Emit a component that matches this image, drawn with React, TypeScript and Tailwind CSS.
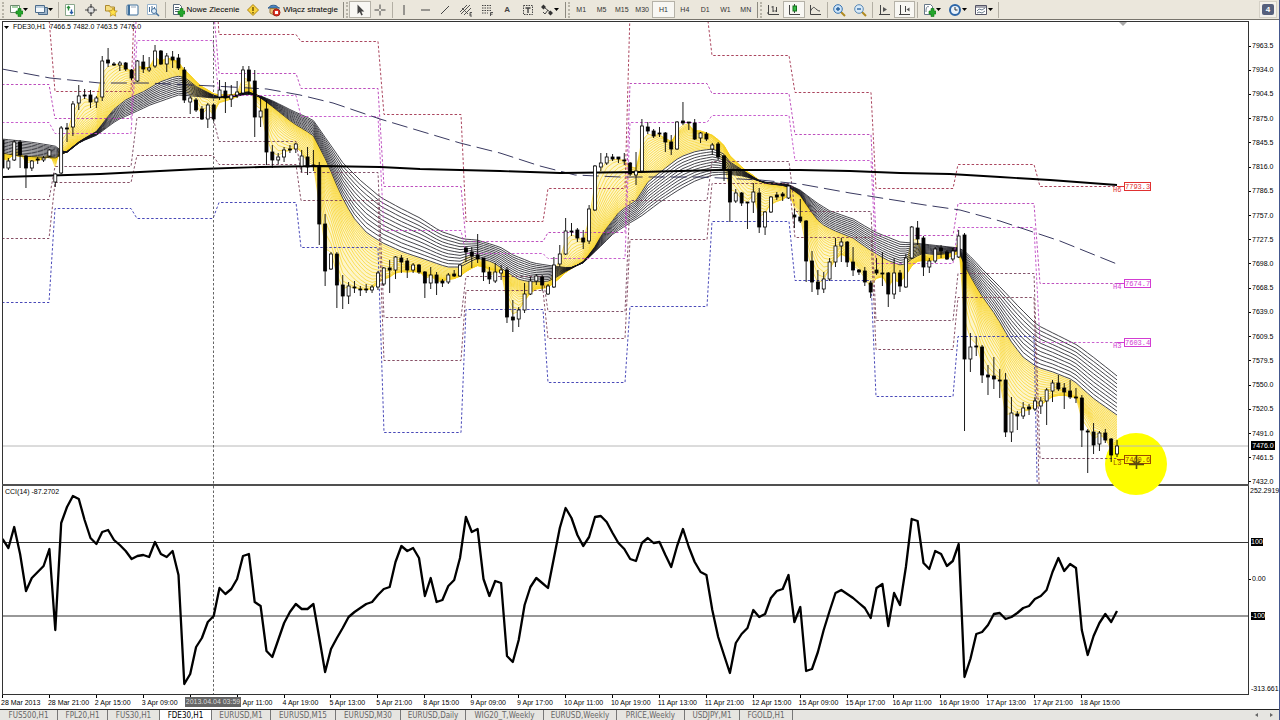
import type { ReactNode } from "react";
import clsx from "clsx";

type Point = [number, number];
// high, body top, body bottom, low, rising
type Candle = [number, number, number, number, number];

const STEP = 5.866;
const barX = (i: number) => 2.5 + STEP * i;

const CANDLES: Candle[] = [
  [133, 140, 168, 170, 0], [158, 161, 168, 170, 1], [140, 142, 160, 161, 1], [140, 142, 155, 168, 0],
  [155, 156, 168, 188, 0], [160, 161, 168, 171, 1], [157, 159, 160, 164, 0], [156, 158, 160, 162, 1],
  [149, 150, 156, 157, 1], [173, 174, 182, 187, 1], [126, 128, 173, 174, 1], [123, 128, 129, 142, 0],
  [101, 104, 127, 136, 1], [85, 96, 103, 110, 1], [89, 95, 96, 99, 0], [90, 95, 102, 108, 0],
  [96, 98, 102, 108, 1], [56, 61, 97, 101, 1], [48, 60, 63, 67, 0], [62, 64, 65, 66, 0],
  [61, 63, 65, 71, 1], [62, 63, 69, 71, 0], [69, 70, 78, 80, 0], [60, 61, 81, 82, 1],
  [55, 62, 69, 73, 0], [57, 68, 70, 72, 1], [45, 51, 66, 68, 1], [50, 51, 64, 65, 0],
  [53, 56, 64, 72, 1], [51, 57, 60, 68, 0], [54, 58, 68, 70, 0], [67, 70, 100, 103, 0],
  [96, 98, 102, 114, 1], [98, 100, 110, 112, 0], [106, 109, 119, 120, 0], [103, 105, 119, 128, 1],
  [104, 105, 119, 121, 0], [80, 90, 97, 100, 1], [82, 91, 98, 113, 0], [85, 95, 99, 107, 1],
  [81, 92, 95, 98, 1], [66, 70, 93, 95, 1], [66, 70, 81, 95, 0], [70, 81, 117, 137, 0],
  [98, 111, 117, 127, 1], [100, 109, 152, 165, 0], [145, 152, 160, 168, 0], [153, 157, 160, 164, 1],
  [147, 150, 157, 162, 1], [145, 149, 150, 153, 0], [143, 144, 149, 153, 1], [150, 156, 166, 172, 1],
  [147, 157, 167, 175, 0], [150, 165, 166, 171, 0], [162, 166, 224, 245, 0], [214, 224, 271, 286, 0],
  [252, 254, 269, 270, 1], [252, 254, 285, 308, 0], [275, 285, 296, 309, 0], [282, 286, 296, 304, 1],
  [281, 287, 288, 293, 0], [286, 289, 290, 296, 0], [284, 289, 290, 293, 0], [285, 287, 290, 293, 1],
  [271, 273, 287, 290, 1], [267, 268, 284, 286, 1], [260, 268, 270, 293, 0], [256, 257, 270, 279, 1],
  [255, 258, 262, 273, 0], [258, 261, 270, 278, 0], [263, 265, 270, 273, 1], [264, 265, 272, 274, 0],
  [271, 272, 283, 298, 0], [267, 275, 283, 289, 1], [272, 275, 283, 295, 0], [279, 281, 283, 287, 0],
  [273, 275, 282, 284, 1], [270, 274, 276, 277, 0], [264, 265, 276, 277, 1], [247, 248, 252, 262, 0],
  [247, 252, 256, 268, 0], [234, 255, 259, 263, 0], [258, 258, 272, 281, 0], [267, 272, 279, 284, 0],
  [263, 272, 281, 283, 1], [265, 270, 273, 280, 1], [267, 270, 317, 323, 0], [300, 317, 320, 332, 0],
  [307, 310, 319, 327, 1], [283, 294, 310, 313, 1], [277, 281, 294, 295, 1], [274, 276, 281, 285, 1],
  [275, 277, 285, 291, 0], [284, 286, 294, 295, 1], [257, 265, 287, 288, 1], [245, 254, 264, 267, 1],
  [218, 231, 254, 255, 1], [223, 231, 232, 236, 0], [228, 230, 238, 242, 0], [230, 238, 242, 249, 0],
  [205, 209, 241, 244, 1], [165, 166, 210, 211, 1], [153, 163, 167, 171, 1], [153, 157, 163, 165, 1],
  [154, 157, 159, 161, 0], [157, 157, 159, 163, 0], [153, 160, 161, 165, 0], [162, 163, 174, 176, 0],
  [152, 171, 175, 185, 1], [119, 126, 171, 173, 1], [122, 127, 131, 134, 0], [129, 131, 136, 138, 0],
  [127, 133, 134, 137, 0], [132, 133, 142, 152, 0], [135, 142, 149, 155, 0], [121, 122, 149, 150, 1],
  [102, 121, 123, 125, 0], [122, 122, 123, 130, 0], [119, 123, 139, 140, 0], [132, 133, 138, 143, 1],
  [132, 134, 139, 141, 0], [143, 145, 149, 155, 1], [142, 144, 157, 160, 0], [155, 156, 170, 181, 0],
  [170, 171, 202, 222, 0], [189, 193, 201, 203, 1], [192, 193, 203, 206, 0], [202, 202, 203, 229, 0],
  [183, 192, 202, 213, 1], [188, 193, 227, 233, 0], [211, 212, 227, 235, 1], [196, 197, 212, 213, 1],
  [192, 195, 197, 200, 0], [192, 194, 196, 201, 0], [185, 186, 198, 199, 1], [209, 215, 217, 228, 0],
  [199, 217, 221, 223, 0], [220, 221, 261, 282, 0], [251, 261, 282, 292, 0], [270, 282, 289, 295, 0],
  [272, 279, 289, 293, 1], [258, 262, 279, 281, 1], [238, 246, 262, 267, 1], [238, 242, 246, 262, 1],
  [241, 242, 262, 267, 0], [247, 262, 270, 276, 0], [269, 270, 272, 275, 0], [267, 271, 282, 286, 0],
  [281, 283, 292, 298, 0], [258, 270, 273, 275, 0], [252, 273, 274, 286, 0], [272, 273, 294, 307, 0],
  [258, 273, 294, 299, 1], [270, 273, 286, 292, 0], [254, 258, 287, 288, 1], [226, 227, 258, 259, 1],
  [221, 228, 239, 245, 0], [236, 238, 267, 276, 0], [258, 261, 267, 273, 1], [247, 249, 261, 263, 1],
  [245, 248, 251, 258, 0], [250, 252, 259, 260, 0], [248, 251, 259, 261, 1], [230, 236, 257, 258, 1],
  [233, 235, 359, 431, 0], [333, 347, 359, 372, 1], [337, 346, 347, 356, 0], [345, 347, 375, 383, 0],
  [365, 375, 377, 395, 0], [357, 376, 379, 389, 0], [369, 380, 381, 398, 0], [373, 380, 432, 437, 0],
  [397, 413, 432, 442, 1], [411, 414, 416, 430, 0], [402, 408, 416, 419, 1], [404, 407, 409, 415, 0],
  [397, 401, 409, 411, 1], [397, 401, 406, 414, 1], [388, 390, 401, 425, 1], [380, 383, 391, 402, 1],
  [375, 383, 389, 391, 0], [383, 388, 392, 409, 0], [380, 391, 397, 399, 0], [388, 397, 398, 403, 0],
  [395, 398, 430, 447, 0], [429, 431, 432, 473, 0], [423, 432, 445, 454, 0], [431, 433, 444, 451, 1],
  [429, 433, 440, 443, 0], [438, 439, 455, 462, 0], [440, 446, 454, 457, 1],
];

const CCI = [
  539, 548, 527, 554, 591, 578, 572, 566, 549, 630, 523, 507, 496, 499, 520, 538, 544, 532, 530, 540,
  545, 551, 559, 556, 555, 557, 542, 554, 557, 551, 575, 684, 674, 647, 638, 622, 616, 588, 594, 589,
  579, 556, 554, 602, 606, 651, 657, 640, 623, 612, 604, 609, 609, 604, 638, 672, 649, 638, 628, 617,
  612, 608, 604, 602, 595, 589, 587, 562, 546, 551, 548, 558, 596, 578, 602, 600, 586, 580, 558, 517,
  532, 529, 579, 596, 581, 583, 656, 662, 640, 605, 587, 578, 583, 588, 558, 528, 508, 518, 535, 546,
  537, 517, 516, 522, 533, 543, 549, 559, 561, 543, 538, 543, 542, 555, 567, 546, 529, 547, 562, 572,
  575, 610, 637, 655, 673, 643, 634, 628, 610, 617, 614, 598, 591, 589, 575, 622, 607, 671, 669, 652,
  630, 611, 593, 590, 594, 598, 603, 608, 618, 588, 584, 626, 593, 605, 567, 519, 521, 563, 569, 551,
  554, 566, 561, 544, 677, 659, 634, 632, 625, 614, 613, 619, 617, 613, 608, 606, 599, 596, 590, 572,
  558, 571, 564, 568, 630, 655, 636, 623, 614, 622, 611,
];

const SLOW: Point[] = [
  [2, 139], [30, 142], [55, 146], [62, 151], [65, 154], [80, 142], [97, 135], [117, 120], [133, 113],
  [150, 105], [167, 99], [178, 95], [193, 96], [213, 98], [233, 97], [247, 94], [258, 95], [273, 101],
  [293, 111], [313, 120], [327, 140], [343, 163], [360, 180], [380, 197], [400, 208], [420, 218],
  [440, 231], [463, 239], [477, 240], [500, 247], [513, 255], [533, 263], [553, 266], [570, 268],
  [583, 263], [600, 247], [613, 234], [628, 224], [640, 217], [660, 202], [680, 189], [697, 180],
  [713, 175], [727, 174], [743, 176], [763, 182], [787, 184], [800, 190], [817, 203], [830, 211],
  [853, 219], [875, 232], [900, 242], [923, 244], [950, 247], [960, 248], [967, 253], [983, 270],
  [1000, 287], [1017, 305], [1037, 325], [1057, 335], [1077, 345], [1097, 360], [1117, 376],
];

const FAST: Point[] = [
  [2, 153], [20, 156], [40, 157], [55, 158], [65, 153], [80, 141], [97, 131], [113, 110], [127, 99],
  [143, 92], [160, 82], [177, 76], [187, 78], [193, 85], [207, 92], [217, 97], [233, 96], [247, 91],
  [258, 96], [273, 107], [293, 123], [313, 135], [327, 162], [340, 193], [353, 217], [367, 233],
  [383, 243], [403, 252], [427, 260], [447, 267], [460, 267], [477, 258], [493, 262], [507, 272],
  [520, 280], [533, 282], [550, 281], [563, 273], [583, 262], [593, 250], [603, 233], [620, 211],
  [637, 200], [647, 183], [663, 170], [680, 157], [697, 151], [713, 149], [723, 153], [730, 162],
  [747, 173], [763, 183], [787, 186], [800, 195], [810, 210], [820, 223], [833, 230], [853, 238],
  [870, 250], [887, 260], [903, 266], [913, 258], [923, 253], [937, 255], [950, 253], [960, 250],
  [965, 267], [980, 293], [997, 317], [1010, 340], [1023, 357], [1037, 367], [1053, 372],
  [1073, 380], [1093, 398], [1117, 415],
];

const MA_LONG: Point[] = [
  [2, 177], [100, 174], [200, 169], [260, 167], [320, 166], [380, 167], [420, 169], [500, 171],
  [560, 173], [640, 172], [720, 170], [800, 170], [850, 171], [900, 173], [950, 174], [1000, 177],
  [1050, 180], [1117, 185],
];

const MA_DASHED: Point[] = [
  [2, 69], [50, 78], [100, 83], [147, 83], [213, 86], [267, 89], [300, 95], [333, 103], [380, 119],
  [420, 131], [460, 143], [500, 153], [540, 166], [575, 175], [620, 177], [700, 177], [760, 180],
  [800, 184], [850, 193], [875, 197], [925, 205], [960, 210], [1000, 221], [1060, 241], [1117, 264],
];

// start and end of each trading day
const DAYS: Point[] = [
  [2, 49], [55, 131], [137, 213], [219, 296], [301, 378], [384, 461], [466, 543], [548, 625],
  [630, 707], [712, 789], [795, 871], [876, 953], [958, 1034], [1040, 1117],
];

const PIVOTS = [
  { color: "#a0304c", levels: [18, 91, -62, 34, 41, 114, 221, 188, 12, 55, 92, 188, 164, 186] },
  { color: "#b63ab6", levels: [84, 118, 2, 73, 88, 186, 241, 232, 83, 93, 134, 235, 203, 283] },
  { color: "#c24cc8", levels: [122, 133, 40, 95, 116, 230, 253, 258, 122, 115, 160, 263, 227, 342] },
  { color: "#75405a", levels: [199, 166, 117, 141, 172, 317, 276, 311, 200, 161, 211, 320, 273, 458] },
  { color: "#7a3c55", levels: [238, 182, 155, 164, 200, 360, 290, 338, 239, 183, 237, 349, 297, 518] },
  { color: "#3434b0", levels: [302, 208, 218, 202, 247, 432, 309, 382, 306, 221, 280, 396, 336, 615] },
];

const PIVOT_TAGS = [
  { name: "H6", price: "7793.3", y: 186, color: "#e03030" },
  { name: "H4", price: "7674.7", y: 283, color: "#d23cd2" },
  { name: "H3", price: "7603.4", y: 342, color: "#d23cd2" },
  { name: "L3", price: "7460.6", y: 459, color: "#9a4a00" },
];

const PRICES = [
  "7963.5", "7934.0", "7904.5", "7875.0", "7845.5", "7816.0", "7786.5", "7757.0", "7727.5", "7698.0",
  "7668.5", "7639.0", "7609.5", "7579.5", "7550.0", "7520.5", "7491.0", "7461.5", "7432.0",
];

// the fifth slot lies under the crosshair's date, the sixth is half covered by it
const DATES = [
  "28 Mar 2013", "28 Mar 21:00", "2 Apr 15:00", "3 Apr 09:00", "", "Apr 11:00", "4 Apr 19:00",
  "5 Apr 13:00", "5 Apr 21:00", "8 Apr 15:00", "9 Apr 09:00", "9 Apr 17:00", "10 Apr 11:00",
  "10 Apr 19:00", "11 Apr 13:00", "11 Apr 21:00", "12 Apr 15:00", "15 Apr 09:00", "15 Apr 17:00",
  "16 Apr 11:00", "16 Apr 19:00", "17 Apr 13:00", "17 Apr 21:00", "18 Apr 15:00",
];

const TABS = [
  { label: "FUS500,H1", width: "w-[58px]" },
  { label: "FPL20,H1", width: "w-[50px]" },
  { label: "FUS30,H1", width: "w-[52px]" },
  { label: "FDE30,H1", width: "w-[52px]" },
  { label: "EURUSD,M1", width: "w-[59px]" },
  { label: "EURUSD,M15", width: "w-[65px]" },
  { label: "EURUSD,M30", width: "w-[65px]" },
  { label: "EURUSD,Daily", width: "w-[65px]" },
  { label: "WIG20_T,Weekly", width: "w-[78px]" },
  { label: "EURUSD,Weekly", width: "w-[73px]" },
  { label: "PRICE,Weekly", width: "w-[68px]" },
  { label: "USDJPY,M1", width: "w-[55px]" },
  { label: "FGOLD,H1", width: "w-[53px]" },
];

function valueAt(points: Point[], x: number) {
  for (let i = 1; i < points.length; i++) {
    const [x0, y0] = points[i - 1];
    const [x1, y1] = points[i];
    if (x <= x1) return y0 + ((y1 - y0) * (x - x0)) / (x1 - x0);
  }
  return points[points.length - 1][1];
}

const toPath = (points: Point[]) =>
  points.map(([x, y], i) => `${i ? "L" : "M"}${x.toFixed(1)} ${y.toFixed(1)}`).join("");

const closes = CANDLES.map(([, top, bottom, , up]) => (up ? top : bottom));

function ema(period: number) {
  const k = 2 / (period + 1);
  const out = [159];
  for (let i = 1; i < closes.length; i++) out.push(out[i - 1] + (closes[i] - out[i - 1]) * k);
  return out;
}

const slow = CANDLES.map((_, i) => valueAt(SLOW, barX(i)));
const fast = CANDLES.map((_, i) => valueAt(FAST, barX(i)));
const edge = ema(2);

const barPath = (values: number[]) => toPath(values.map((v, i) => [barX(i), v] as Point));

const BLACK_LINES = Array.from({ length: 11 }, (_, k) =>
  barPath(slow.map((v, i) => v + ((fast[i] - v) * k) / 10)),
);

// averages of 2 to 22 bars, pulled so that the last one runs into the black group
const longest = ema(22);
const YELLOW_LINES = Array.from({ length: 20 }, (_, k) => {
  const t = k / 20;
  return barPath(ema(k + 2).map((v, i) => v + (fast[i] - longest[i]) * t));
});

const BAND =
  barPath(fast) +
  edge.map((_, k) => edge.length - 1 - k).map((i) => `L${barX(i).toFixed(1)} ${edge[i].toFixed(1)}`).join("") +
  "Z";

function PriceChart() {
  return (
    <svg
      viewBox="3 22 1245 462"
      preserveAspectRatio="xMinYMin meet"
      className="block h-full w-full overflow-visible"
      role="img"
      aria-label="FDE30 H1 price chart"
    >
      <defs>
        <clipPath id="plot">
          <rect x="3" y="22" width="1245" height="462" />
        </clipPath>
      </defs>
      <circle cx="1136" cy="464" r="31" fill="#ffff00" />
      <g clipPath="url(#plot)" fill="none">
        <path d="M3 446H1248" stroke="#b8b8b8" />
        <path d={BAND} fill="#fbe88a" fillOpacity="0.45" />
        {YELLOW_LINES.map((d, i) => (
          <path key={i} d={d} stroke="#f8d222" strokeWidth="0.7" />
        ))}
        {BLACK_LINES.map((d, i) => (
          <path key={i} d={d} stroke="#14141c" strokeWidth="0.8" />
        ))}
        {PIVOTS.map(({ color, levels }) => (
          <path
            key={color}
            d={toPath(levels.flatMap((y, i) => [[DAYS[i][0], y + 0.5], [DAYS[i][1], y + 0.5]] as Point[]))}
            stroke={color}
            strokeDasharray="2.5 2"
            strokeWidth="0.9"
          />
        ))}
        <path d={toPath(MA_DASHED)} stroke="#22224e" strokeDasharray="16 6" strokeWidth="0.9" />
        <path d={toPath(MA_LONG)} stroke="#000" strokeWidth="1.9" />
        <path d="M213.5 22V484" stroke="#555" strokeDasharray="2.5 2" strokeWidth="0.9" />
        {CANDLES.map(([high, top, bottom, low, up], i) => (
          <g key={i}>
            <path d={`M${barX(i)} ${high}V${low}`} stroke="#000" strokeWidth="0.9" />
            <rect
              x={barX(i) - 1.5}
              y={top}
              width="3"
              height={Math.max(bottom - top, 1)}
              fill={up ? "#fff" : "#000"}
              stroke="#000"
              strokeWidth="0.8"
            />
          </g>
        ))}
      </g>
      <path d="M1119 22h8l-4 4z" fill="#a8a8a8" />
      {PIVOT_TAGS.map(({ name, price, y, color }) => (
        <g key={name} fill={color} className="font-['Liberation_Mono',monospace] text-[7px]">
          <path d={`M1117 ${y + 0.5}h7`} stroke={color} />
          <text x="1113" y={y + 6}>{name}</text>
          <rect x="1124.5" y={y - 3.5} width="26" height="8" fill="none" stroke={color} />
          <text x="1125" y={y + 3}>{price}</text>
        </g>
      ))}
      <path d="M1136.5 455v14M1129 464.5h15M1133 461l3.5 3.5 3.5-3.5" fill="none" stroke="#5a4a10" strokeWidth="1.6" />
    </svg>
  );
}

function CciChart() {
  return (
    <svg
      viewBox="3 486 1245 208"
      preserveAspectRatio="xMinYMin meet"
      className="block h-full w-full"
      role="img"
      aria-label="CCI(14)"
    >
      <path d="M3 542.5H1248M3 616H1248" stroke="#333" strokeWidth="1.1" />
      <path d="M213.5 486V694" stroke="#555" strokeDasharray="2.5 2" strokeWidth="0.9" />
      <path
        d={barPath(CCI)}
        fill="none"
        stroke="#000"
        strokeWidth="2.3"
        strokeLinejoin="round"
      />
    </svg>
  );
}

const Icon = ({ children }: { children: ReactNode }) => (
  <svg viewBox="0 0 14 14" className="size-3.5 shrink-0" fill="none" stroke="#444" aria-hidden="true">
    {children}
  </svg>
);

const Caret = () => (
  <svg viewBox="0 0 5 3" className="h-[3px] w-[5px] shrink-0" fill="#000" aria-hidden="true">
    <path d="M0 0h5L2.5 3z" />
  </svg>
);

const plus = <path d="M9 5.5h3v2.5h2v3h-2v2.500h-3V11H7V8h2z" fill="#25a52c" stroke="#0d7514" strokeWidth="0.6" />;

const icons: Record<string, ReactNode> = {
  newChart: <><path d="M1.500 2.500h9v7h-9z" fill="#fff" stroke="#6c8a70" /><path d="M3 4h6" stroke="#4aa04a" />{plus}</>,
  profiles: <><path d="M4.500 4.500h9v7h-9z" fill="#9db5cc" stroke="#4d6d8c" /><path d="M1.500 2.500h9v7h-9z" fill="#f4f8fb" stroke="#4d6d8c" /><path d="M2 4h8" stroke="#7ea0c0" /></>,
  market: <><path d="M2.500 1.500h9v11h-9z" fill="#fff" stroke="#89a78c" /><path d="M5.500 7.500V3.500M4 5l1.500-1.500L7 5" stroke="#2a8f3c" strokeWidth="1.300" /><path d="M8.500 6.500v4M7 9l1.500 1.500L10 9" stroke="#2a5da8" strokeWidth="1.300" /></>,
  target: <><circle cx="7" cy="7" r="3.500" fill="#ddd" stroke="#555" /><path d="M7 1v4M7 9v4M1 7h4M9 7h4" stroke="#444" strokeWidth="1.200" /></>,
  star: <><path d="M1.500 2.500h4l1 1.500h4v4h-9z" fill="#f5dd80" stroke="#ad8a30" /><path d="m9 5 1.300 2.700 3 .400-2.200 2.100.6 3L9 11.700l-2.700 1.500.6-3-2.200-2.100 3-.400z" fill="#ffe04a" stroke="#b58a10" strokeWidth="0.7" /></>,
  panel: <><rect x="2" y="2" width="11" height="10" rx="1" fill="#fff" stroke="#3d6f9c" /><path d="M4 2v10" stroke="#3d6f9c" strokeWidth="2" /><path d="M6 4h5" stroke="#9ab" /></>,
  tester: <><path d="M1.500 1.500h9v10h-9z" fill="#fff" stroke="#99b4cc" /><path d="M3.500 4v5M6 3v5M8.500 4v3" stroke="#456c94" /><circle cx="8" cy="8" r="2.500" fill="#dfeefa" stroke="#47729d" /><path d="m10 10 3 3" stroke="#47729d" strokeWidth="1.500" /></>,
  order: <><path d="M2.500 1.500h6l2 2v8h-8z" fill="#fff" stroke="#567" /><path d="M4 4.500h4M4 6.500h4M4 8.500h3" stroke="#567" />{plus}</>,
  warn: <><path d="m7 1.500 5.500 5.500L7 12.500 1.500 7z" fill="#f8d43c" stroke="#b08410" /><path d="M7 4v4M7 9v1.500" stroke="#6a4d00" strokeWidth="1.400" /></>,
  strategy: <><path d="M2 4.500C3 1.500 10 1.500 11 4.500l1.500.5H1z" fill="#4c86c4" stroke="#33608f" /><path d="M3 5.500h7v4l-3 2.500-4-2z" fill="#e8c078" stroke="#9b7a40" /><circle cx="9.500" cy="9.500" r="3.500" fill="#dc3424" stroke="#a01c10" /><path d="M8 8h3v3H8z" fill="#fff" stroke="none" /></>,
  cursor: <path d="M4.500 1.500v9.500l2.300-2 1.500 3.500 1.500-.7L8.300 8.500h3z" fill="#444" stroke="none" />,
  cross: <path d="M7 1.500V6M7 8v4.500M1.500 7H6M8 7h4.500" />,
  vline: <path d="M7 2v10" />,
  hline: <path d="M3 7h9" />,
  diag: <path d="m3 11 8-8" />,
  channel: <><path d="m1 9 7-7M2 11l9-9M5 12l7-7M3 5l6 6" strokeWidth="0.900" /><path d="M13 9.500h-2v3.500h2M11 11.200h1.500" strokeWidth="0.900" /></>,
  fib: <><path d="M2 2.500h10M2 5h10M2 7.500h10M2 10h6" strokeDasharray="1.500 1" /><path d="M10.500 13V9.500h2.500M10.500 11.200h2" strokeWidth="0.900" /></>,
  label: <><path d="M2.500 2.500h9v9h-9z" strokeDasharray="1.500 1" /><path d="M4.500 5h5M7 5v5" strokeWidth="1.400" /></>,
  arrows: <><path d="m1 4 2.500-2.500L6 4 3.500 6.500zM8 10l2.500-2.500L13 10l-2.500 2.500z" fill="#333" stroke="none" /><path d="m5 5 5 4M3 9l2 2 3-4" /></>,
  bars: <path d="M2.500 2v9.500H13M1 10h1.500M7 3v6M5.500 4H7M7 8h1.500M10.500 4v5M9 8h1.500" />,
  candles: <><path d="M2.500 2v9.500H13M7.500 1v9" /><rect x="6" y="3" width="3.500" height="5" fill="#35ba45" stroke="#12701c" /></>,
  line: <path d="M2.500 2v9.500H13M2.500 8C6 2 6.500 5 8 6s2 2 4 2" />,
  zoomIn: <><path d="m9 9 4 4" stroke="#b08a20" strokeWidth="2" /><circle cx="6" cy="6" r="4.300" fill="#cde4f8" stroke="#3672b0" /><path d="M4 6h4M6 4v4" stroke="#225c9a" strokeWidth="1.300" /></>,
  zoomOut: <><path d="m9 9 4 4" stroke="#b08a20" strokeWidth="2" /><circle cx="6" cy="6" r="4.300" fill="#d8eaf8" stroke="#5a88b4" /><path d="M4 6h4" stroke="#225c9a" strokeWidth="1.300" /></>,
  scroll: <><path d="M3.500 2v10M2 11.500h11" /><path d="m6 4 4 2.500L6 9z" fill="#555" stroke="none" /></>,
  shift: <><path d="M3.500 2v10M2 11.500h11M8.500 3v6" /><path d="M12.500 4.500v4l-3-2z" fill="#555" stroke="none" /></>,
  indicator: <><path d="M2.500 1.500h6l2 2v8h-8z" fill="#fff" stroke="#678" /><path d="M4 9c0-6 2-6 3-5" stroke="#678" />{plus}</>,
  clock: <><circle cx="7" cy="7" r="5" fill="#eaf3fb" stroke="#2d66a8" strokeWidth="2" /><path d="M7 4v3h2.500" stroke="#333" /></>,
  template: <><path d="M1.500 2.500h11v9h-11z" fill="#fff" stroke="#556" /><path d="M2 4h10" stroke="#556" /><path d="m3 8 2-2 3 1 3-2M3 10l2-1 3 1 3-2" stroke="#6a7a8a" /></>,
};

function ToolButton({ icon, name, caret, pressed, children }: {
  icon?: string;
  name: string;
  caret?: boolean;
  pressed?: boolean;
  children?: ReactNode;
}) {
  return (
    <button
      type="button"
      aria-label={name}
      className={clsx(
        "flex h-[17px] flex-1 items-center justify-center whitespace-nowrap",
        pressed && "border border-[#b5b2a8] bg-[#f8f7f3]",
      )}
    >
      {icon && <Icon>{icons[icon]}</Icon>}
      {children}
      {caret && <Caret />}
    </button>
  );
}

const Sep = () => <div className="flex w-1 shrink-0 justify-center"><i className="h-4 w-px bg-[#b3afa4]" /></div>;

const Grip = () => (
  <div className="flex w-[7px] shrink-0 justify-center gap-0.5">
    <i className="h-4 w-px bg-[#8d8a80]" />
    <i className="h-4 border-l-2 border-dotted border-[#b8b4a8]" />
  </div>
);

function Toolbar() {
  return (
    <header className="flex h-5 shrink-0 items-center border-b border-[#77746c] bg-[#ebe7dc] text-[8px] text-black">
      <i className="ml-0.5 h-4 w-1 border-l-2 border-dotted border-[#b8b4a8]" />
      <div className="flex w-[50px]">
        <ToolButton icon="newChart" name="New chart" caret />
        <ToolButton icon="profiles" name="Profiles" caret />
      </div>
      <Sep />
      <div className="flex w-[103px]">
        <ToolButton icon="market" name="Market watch" />
        <ToolButton icon="target" name="Data window" />
        <ToolButton icon="star" name="Navigator" />
        <ToolButton icon="panel" name="Terminal" />
        <ToolButton icon="tester" name="Strategy tester" />
      </div>
      <Sep />
      <div className="flex w-[76px]">
        <ToolButton icon="order" name="Nowe Zlecenie"><span className="ml-0.5">Nowe Zlecenie</span></ToolButton>
      </div>
      <div className="flex w-5">
        <ToolButton icon="warn" name="MetaEditor" />
      </div>
      <div className="flex w-[79px]">
        <ToolButton icon="strategy" name="Włącz strategie"><span className="ml-0.5">Włącz strategie</span></ToolButton>
      </div>
      <Grip />
      <div className="flex w-[41px]">
        <ToolButton icon="cursor" name="Cursor" pressed />
        <ToolButton icon="cross" name="Crosshair" />
      </div>
      <Sep />
      <div className="flex w-[144px]">
        <ToolButton icon="vline" name="Vertical line" />
        <ToolButton icon="hline" name="Horizontal line" />
        <ToolButton icon="diag" name="Trendline" />
        <ToolButton icon="channel" name="Channel" />
        <ToolButton icon="fib" name="Fibonacci" />
        <ToolButton name="Text"><b className="text-[#444]">A</b></ToolButton>
        <ToolButton icon="label" name="Text label" />
      </div>
      <div className="flex w-[22px]">
        <ToolButton icon="arrows" name="Arrows" caret />
      </div>
      <div className="w-1" />
      <Grip />
      <div className="flex w-[185px] text-[#333]">
        {["M1", "M5", "M15", "M30", "H1", "H4", "D1", "W1", "MN"].map((tf) => (
          <ToolButton key={tf} name={tf} pressed={tf === "H1"}>
            <span className="text-[7px]">{tf}</span>
          </ToolButton>
        ))}
      </div>
      <Grip />
      <div className="flex w-[62px]">
        <ToolButton icon="bars" name="Bar chart" />
        <ToolButton icon="candles" name="Candlesticks" pressed />
        <ToolButton icon="line" name="Line chart" />
      </div>
      <Sep />
      <div className="flex w-[41px]">
        <ToolButton icon="zoomIn" name="Zoom in" />
        <ToolButton icon="zoomOut" name="Zoom out" />
      </div>
      <Sep />
      <div className="flex w-[41px]">
        <ToolButton icon="scroll" name="Auto scroll" />
        <ToolButton icon="shift" name="Chart shift" pressed />
      </div>
      <Sep />
      <div className="flex w-[77px]">
        <ToolButton icon="indicator" name="Indicators" caret />
        <ToolButton icon="clock" name="Periods" caret />
        <ToolButton icon="template" name="Templates" caret />
      </div>
      <Sep />
      <button type="button" aria-label="Messages" className="mr-0.5 ml-auto flex h-[17px] w-[18px] items-center justify-center border border-[#d5d1c6] bg-[#f4f2ec]">
        <span className="h-[11px] w-3 rounded-xs bg-[#56607c] text-center text-[8px] leading-[11px] font-bold text-white">4</span>
      </button>
    </header>
  );
}

const Tick = ({ children }: { children: ReactNode }) => (
  <div className="flex h-2.5 items-center">
    <i className="mr-px h-px w-0.5 bg-black" />
    {children}
  </div>
);

export default function App() {
  return (
    <div className="flex h-screen flex-col overflow-hidden border-r border-[#44578e] bg-white font-['Liberation_Sans',sans-serif] text-[7px] leading-[10px] text-black">
      <Toolbar />

      <main className="mt-px ml-0.5 flex min-h-0 flex-1 flex-col">
        <section className="flex min-h-0 flex-[463_1_0%]">
          <div className="relative min-w-0 flex-1 border-x border-t border-[#333]">
            <PriceChart />
            <div className="absolute top-0 left-px flex items-center gap-1">
              <Caret />
              <span>FDE30,H1&nbsp; 7466.5 7482.0 7463.5 7476.0</span>
            </div>
          </div>
          <div className="relative w-[30px] shrink-0">
            <div className="absolute inset-x-0 top-5 -bottom-[3px] flex flex-col justify-between">
              {PRICES.map((p) => <Tick key={p}>{p}</Tick>)}
            </div>
            <span className="absolute top-[420px] left-0.5 h-[9px] w-6 bg-black text-center leading-[9px] text-white">7476.0</span>
          </div>
        </section>

        <div className="mr-[30px] h-0.5 shrink-0 bg-[#505050]" />

        <section className="flex min-h-0 flex-[208_1_0%]">
          <div className="relative min-w-0 flex-1 border-x border-[#333]">
            <CciChart />
            <span className="absolute top-px left-0.5">CCI(14) -87.2702</span>
          </div>
          <div className="relative w-[30px] shrink-0">
            <span className="absolute top-0 left-px">252.2919</span>
            <span className="absolute top-[52px] left-0.5 h-2 bg-black leading-2 text-white">100</span>
            <div className="absolute top-[88px]"><Tick>0.00</Tick></div>
            <span className="absolute top-[126px] left-0.5 h-2 bg-black leading-2 text-white">-100</span>
            <span className="absolute bottom-0 left-0.5">-313.661</span>
          </div>
        </section>

        <div className="relative mr-[30px] h-[15px] shrink-0 border-t border-[#333]">
          <div className="mr-[121px] grid grid-cols-[repeat(24,minmax(0,1fr))]">
            {DATES.map((d, i) => (
              <div key={i} className="whitespace-nowrap">
                <i className="block h-[3px] w-px bg-black" />
                <span className={clsx("block", d === "Apr 11:00" ? "pl-1.5" : "-ml-px")}>{d}</span>
              </div>
            ))}
          </div>
          <span className="absolute top-0.5 left-[183px] w-14 bg-[#666] text-center whitespace-nowrap text-[#ddd]">2013.04.04 03:59</span>
        </div>
      </main>

      <nav
        role="tablist"
        className="flex h-[11px] shrink-0 items-stretch border-t border-[#222] bg-[#e6e5e1] font-['DejaVu_Sans_Condensed',sans-serif] text-[8px] text-[#666]"
      >
        {TABS.map(({ label, width }) => {
          const active = label === "FDE30,H1";
          return (
            <button
              key={label}
              type="button"
              role="tab"
              aria-selected={active}
              className={clsx(
                "h-2.5 shrink-0 border-r border-[#777] text-center leading-[12px] whitespace-nowrap",
                width,
                active && "bg-white text-black",
              )}
            >
              {label}
            </button>
          );
        })}
        <div className="ml-auto flex items-center gap-3 pr-1.5">
          <svg viewBox="0 0 3 4" className="h-1 w-[3px]" fill="#666"><path d="M3 0v4L0 2z" /></svg>
          <svg viewBox="0 0 3 4" className="h-1 w-[3px]" fill="#666"><path d="M0 0v4l3-2z" /></svg>
        </div>
      </nav>
    </div>
  );
}
